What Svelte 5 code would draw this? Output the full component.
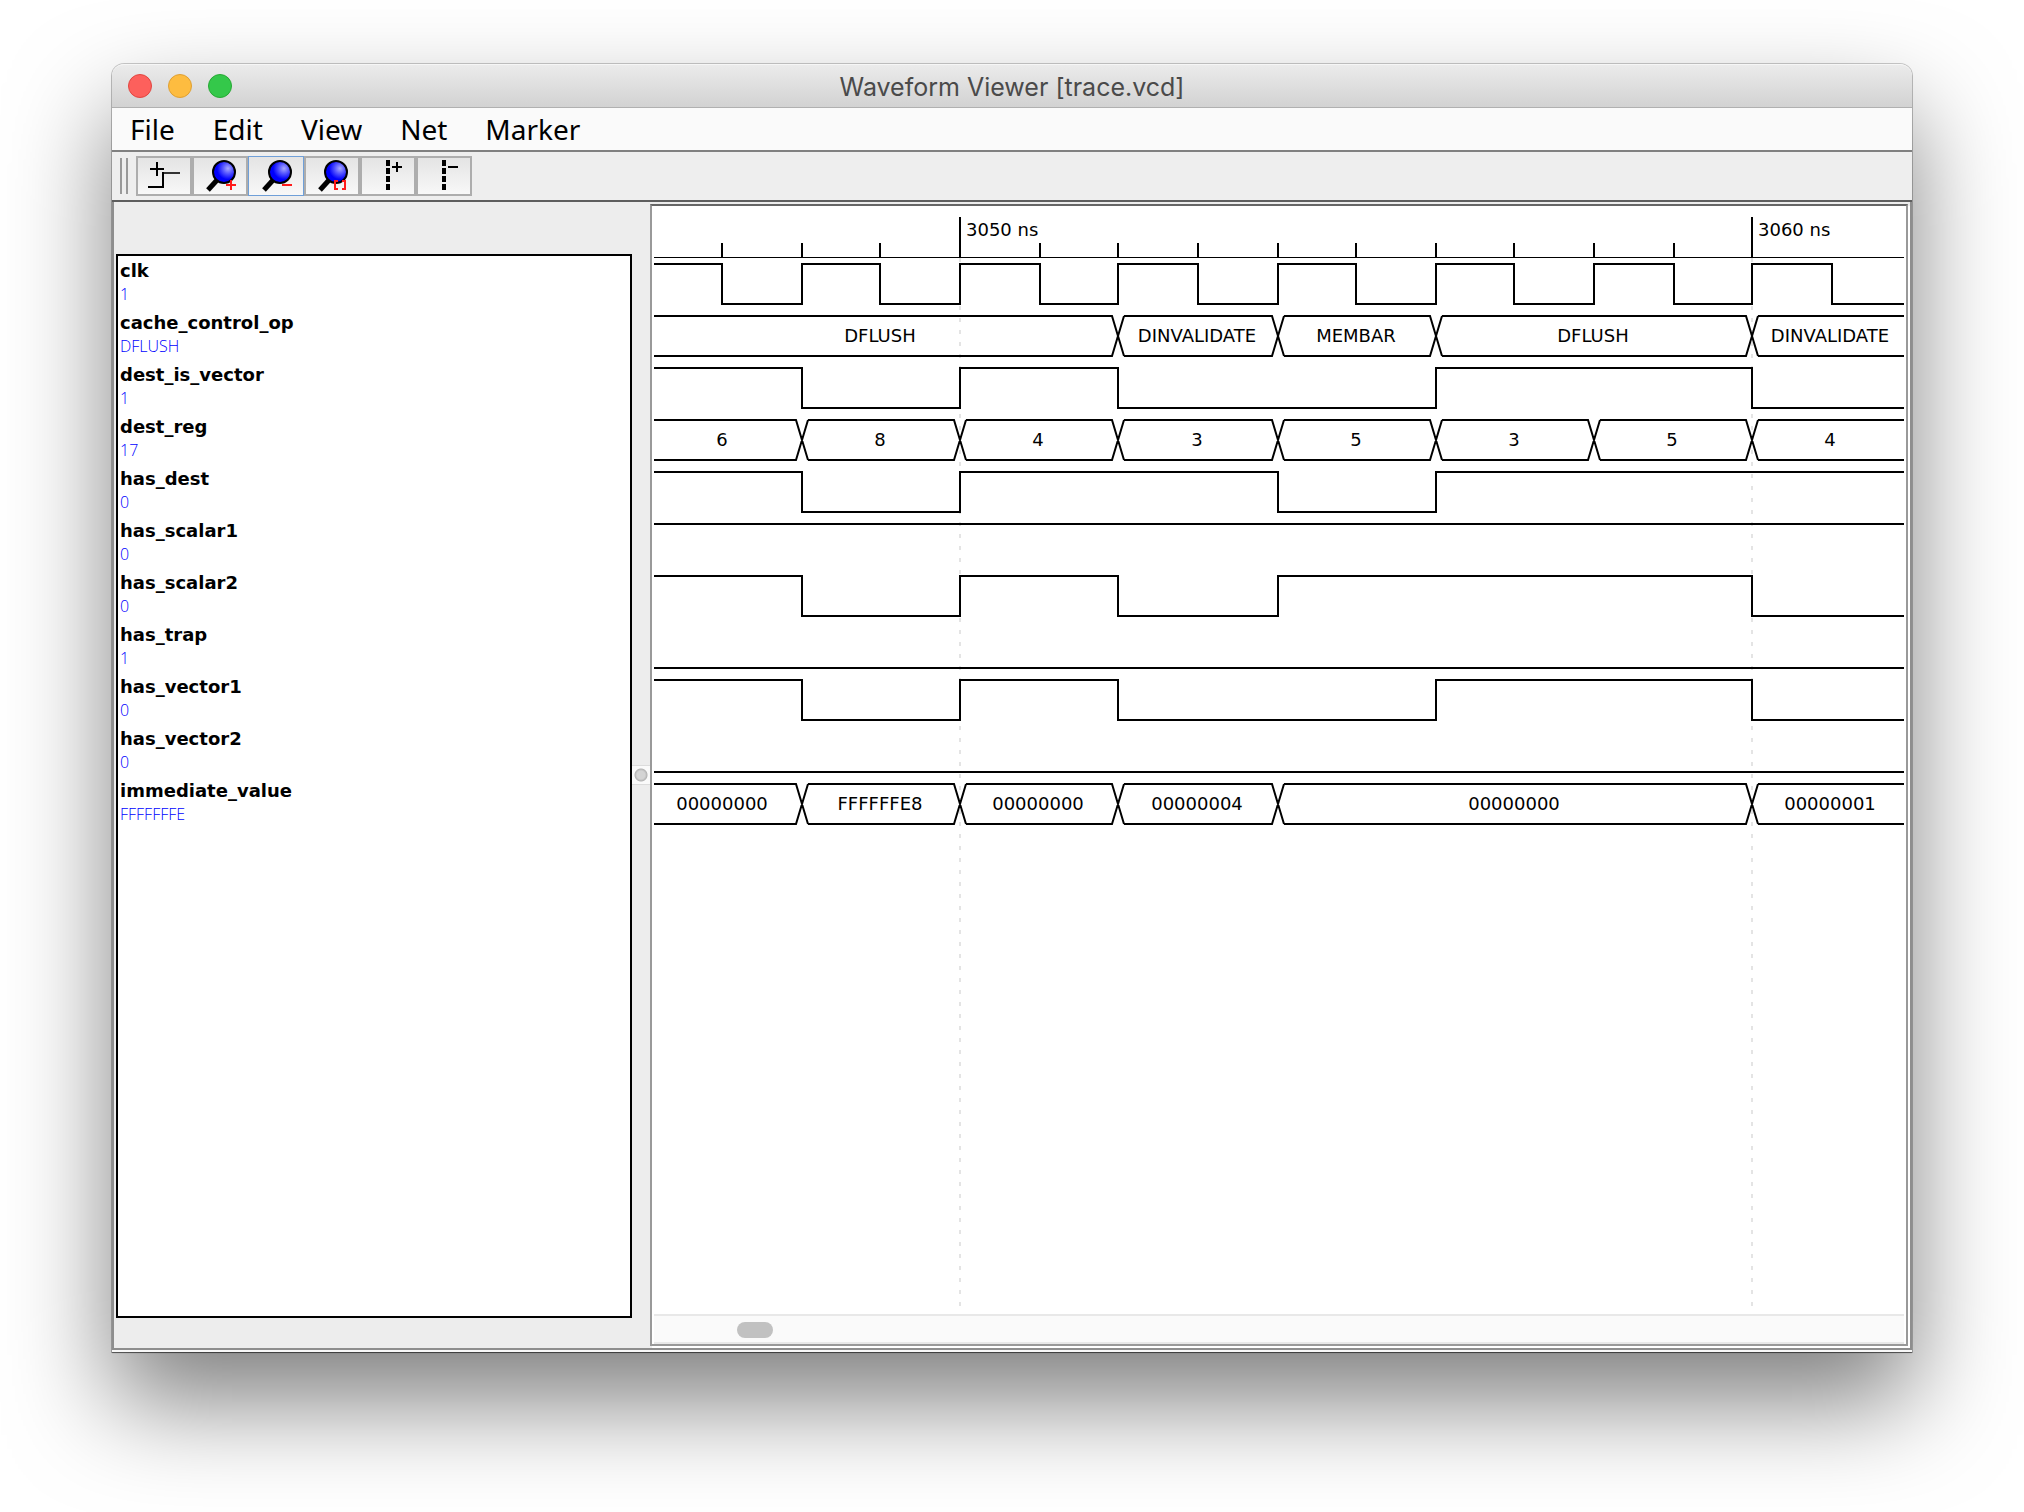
<script>
  const menus = ['File', 'Edit', 'View', 'Net', 'Marker'];
  const tools = [
    { id: 'insert', label: 'Insert net' },
    { id: 'zoom-in', label: 'Zoom in' },
    { id: 'zoom-out', label: 'Zoom out', focused: true },
    { id: 'zoom-fit', label: 'Zoom to selection' },
    { id: 'marker-add', label: 'Insert marker' },
    { id: 'marker-remove', label: 'Remove marker' },
  ];

  // Times are nanoseconds relative to 3050; flips lists the moments where a bit changes level.
  const signals = [
    { name: 'clk', value: '1', start: 1, flips: [-3, -2, -1, 0, 1, 2, 3, 4, 5, 6, 7, 8, 9, 10, 11, 12] },
    { name: 'cache_control_op', value: 'DFLUSH', bus: [[-4, 'DFLUSH'], [2, 'DINVALIDATE'], [4, 'MEMBAR'], [6, 'DFLUSH'], [10, 'DINVALIDATE']] },
    { name: 'dest_is_vector', value: '1', start: 1, flips: [-2, 0, 2, 6, 10] },
    { name: 'dest_reg', value: '17', bus: [[-4, '6'], [-2, '8'], [0, '4'], [2, '3'], [4, '5'], [6, '3'], [8, '5'], [10, '4']] },
    { name: 'has_dest', value: '0', start: 1, flips: [-2, 0, 4, 6] },
    { name: 'has_scalar1', value: '0', start: 1, flips: [] },
    { name: 'has_scalar2', value: '0', start: 1, flips: [-2, 0, 2, 4, 10] },
    { name: 'has_trap', value: '1', start: 0, flips: [] },
    { name: 'has_vector1', value: '0', start: 1, flips: [-2, 0, 2, 6, 10] },
    { name: 'has_vector2', value: '0', start: 0, flips: [] },
    { name: 'immediate_value', value: 'FFFFFFFE', bus: [[-4, '00000000'], [-2, 'FFFFFFE8'], [0, '00000000'], [2, '00000004'], [4, '00000000'], [10, '00000001']] },
  ];

  const LAST = 12;
  const ROW = 52;
  const TOP = 58;
  const SWING = 40;
  const SLANT = 6;

  let width = $state(1250);
  let height = $state(1108);

  const xAt = (t) => 306 + 2 * Math.round(t * 39.62 + 0.05);
  const ticks = Array.from({ length: 14 }, (_, i) => i - 3);

  function bitPath(signal, y) {
    let level = signal.start;
    const yOf = (l) => (l ? y : y + SWING);
    let d = `M0 ${yOf(level)}`;
    for (const t of signal.flips) {
      d += `H${xAt(t)}`;
      level = 1 - level;
      d += `V${yOf(level)}`;
    }
    return d + `H${Math.max(width, xAt(LAST))}`;
  }

  function busPath(signal, y) {
    const b = y + SWING;
    const end = Math.max(width, xAt(LAST));
    let top = `M0 ${y}`;
    let bottom = `M0 ${b}`;
    for (const [t] of signal.bus.slice(1)) {
      const x = xAt(t);
      top += `H${x - SLANT}L${x + SLANT} ${b}M${x + SLANT} ${y}`;
      bottom += `H${x - SLANT}L${x + SLANT} ${y}M${x + SLANT} ${b}`;
    }
    return `${top}H${end}${bottom}H${end}`;
  }

  function busLabels(signal) {
    return signal.bus.map(([t, text], i) => {
      const next = signal.bus[i + 1]?.[0] ?? LAST;
      return { text, x: (xAt(t) + xAt(next)) / 2 - 1 };
    });
  }
</script>

{#snippet lens()}
  <path d="M26 23L16 34" stroke="#000" stroke-width="5" />
  <circle cx="32" cy="16" r="11" fill="url(#lens-fill)" stroke="#000" stroke-width="2" />
{/snippet}

<svg class="defs" aria-hidden="true">
  <defs>
    <radialGradient id="lens-fill" cx="0.68" cy="0.34" r="0.5">
      <stop offset="0" stop-color="#a9a9ff" />
      <stop offset="0.45" stop-color="#5a5aff" />
      <stop offset="1" stop-color="#0000fb" />
    </radialGradient>
  </defs>
</svg>

<div class="desktop">
  <main class="window">
    <header class="titlebar">
      <div class="lights">
        <button class="light close" aria-label="Close"></button>
        <button class="light minimize" aria-label="Minimize"></button>
        <button class="light zoom" aria-label="Zoom"></button>
      </div>
      <h1>Waveform Viewer [trace.vcd]</h1>
    </header>

    <nav class="menubar">
      {#each menus as menu}
        <button>{menu}</button>
      {/each}
    </nav>

    <div class="toolbar" role="toolbar" aria-label="Tools">
      <span class="grip"></span>
      {#each tools as tool}
        <button class="tool" class:focused={tool.focused} aria-label={tool.label}>
          <svg width="56" height="40" viewBox="0 0 56 40" fill="none" stroke="#000" stroke-width="2">
            {#if tool.id === 'insert'}
              <path d="M14 13H28M21 6V20M12 31H27V17H28" />
              <path d="M28 17H44" stroke="#333" />
            {:else if tool.id === 'zoom-in'}
              {@render lens()}
              <path d="M34 29H44M39 24V34" stroke="#ff1a1a" />
            {:else if tool.id === 'zoom-out'}
              {@render lens()}
              <path d="M34 29H44" stroke="#ff1a1a" />
            {:else if tool.id === 'zoom-fit'}
              {@render lens()}
              <path d="M34 25H31V33H34M38 25H41V33H38" stroke="#ff1a1a" />
            {:else}
              <path d="M28 4V34" stroke-width="4" stroke-dasharray="6 2" />
              <path d={tool.id === 'marker-add' ? 'M32 11H42M37 6V16' : 'M32 11H42'} />
            {/if}
          </svg>
        </button>
      {/each}
    </div>

    <div class="body">
      <section class="nets" aria-label="Nets">
        <ul>
          {#each signals as signal}
            <li>
              <span class="name">{signal.name}</span>
              <span class="value">{signal.value}</span>
            </li>
          {/each}
        </ul>
      </section>

      <div class="divider"><span class="knob"></span></div>

      <section class="waves" aria-label="Waveforms">
        <div class="canvas" bind:clientWidth={width} bind:clientHeight={height}>
          <svg class="plot" fill="none" stroke="#000" stroke-width="2">
            {#each [0, 10] as t}
              <path class="guide" d="M{xAt(t)} 52V{height - 8}" />
            {/each}
            <path d="M0 51.5H{width}" stroke-width="1" />
            {#each ticks as t}
              {#if t % 10 === 0}
                <path d="M{xAt(t)} 11V51" />
                <text x={xAt(t) + 6} y="30">{3050 + t} ns</text>
              {:else}
                <path d="M{xAt(t)} 37V51" />
              {/if}
            {/each}
            {#each signals as signal, i}
              {@const y = TOP + i * ROW}
              {#if signal.bus}
                <path d={busPath(signal, y)} />
                {#each busLabels(signal) as label}
                  <text class="centered" x={label.x} y={y + 26}>{label.text}</text>
                {/each}
              {:else}
                <path d={bitPath(signal, y)} />
              {/if}
            {/each}
          </svg>
        </div>
        <div class="scrollbar"><span class="thumb"></span></div>
      </section>
    </div>
  </main>
</div>

<style>
  :global(body) {
    margin: 0;
    background: #fff;
  }

  * {
    box-sizing: border-box;
  }

  button {
    margin: 0;
    padding: 0;
    border: 0;
    background: none;
    color: inherit;
    font: inherit;
  }

  .defs {
    position: absolute;
    width: 0;
    height: 0;
  }

  .desktop {
    display: flex;
    min-height: 100vh;
    padding: 64px 112px 160px;
    overflow: hidden;
    font-family: 'Noto Sans', 'Open Sans', sans-serif;
    color: #000;
  }

  .window {
    flex: 1;
    display: flex;
    flex-direction: column;
    min-width: 0;
    border-radius: 12px 12px 0 0;
    background: #ededed;
    box-shadow:
      0 0 0 1px rgba(0, 0, 0, 0.2),
      0 1px 1px rgba(0, 0, 0, 0.5),
      0 50px 100px rgba(0, 0, 0, 0.5);
  }

  .titlebar {
    display: grid;
    grid-template-columns: 1fr auto 1fr;
    align-items: center;
    height: 44px;
    padding: 0 16px;
    border-top: 1px solid #f6f6f6;
    border-bottom: 1px solid #b0b0b0;
    border-radius: 12px 12px 0 0;
    background: linear-gradient(#ebebeb, #d2d2d2);
  }

  .lights {
    display: flex;
    gap: 16px;
  }

  .light {
    width: 24px;
    height: 24px;
    border: 1px solid;
    border-radius: 50%;
  }

  .close {
    background: #fd605c;
    border-color: #e14640;
  }

  .minimize {
    background: #fdbc40;
    border-color: #dfa033;
  }

  .zoom {
    background: #34c84a;
    border-color: #27a934;
  }

  h1 {
    margin: 0;
    padding-top: 2px;
    font: 400 25px/32px Inter, sans-serif;
    color: #4a4a4a;
  }

  .menubar {
    display: flex;
    gap: 38px;
    height: 44px;
    padding: 0 18px;
    border-bottom: 2px solid #808080;
    background: #fafafa;
    font-size: 28px;
    line-height: 42px;
  }

  .toolbar {
    display: flex;
    align-items: center;
    height: 50px;
    padding: 0 8px;
    border-bottom: 2px solid #5e5e5e;
    background: #eee;
  }

  .grip {
    width: 8px;
    height: 36px;
    margin-right: 8px;
    border: solid #999;
    border-width: 0 2px;
  }

  .tool {
    display: grid;
    place-items: center;
    width: 56px;
    height: 40px;
    border: 2px solid #adadad;
    background: linear-gradient(#e4e4e4, #f8f8f8);
  }

  .tool svg {
    margin: -2px;
  }

  .focused {
    border: 1px solid #6f9fd8;
  }

  .body {
    flex: 1;
    display: flex;
    margin-bottom: 2px;
    border: solid #8e8e8e;
    border-width: 0 2px 2px;
    box-shadow: 0 2px 0 #f8f8f8;
  }

  .nets {
    flex: 0 0 518px;
    display: flex;
    padding: 52px 0 30px 2px;
  }

  ul {
    flex: 1;
    margin: 0;
    padding: 2px;
    border: 2px solid #000;
    background: #fff;
    list-style: none;
  }

  li {
    display: flex;
    flex-direction: column;
    height: 52px;
  }

  .name {
    font-family: 'DejaVu Sans', sans-serif;
    font-size: 18px;
    font-weight: 700;
    line-height: 26px;
  }

  .value {
    font-family: 'Open Sans', sans-serif;
    font-size: 16px;
    font-weight: 300;
    line-height: 20px;
    color: #00f;
  }

  .divider {
    flex: 0 0 18px;
    display: flex;
    align-items: center;
  }

  .knob {
    flex: 1;
    height: 20px;
    border: solid #dcdcdc;
    border-width: 1px 0;
    background: radial-gradient(circle, #d4d4d4 4px, #b4b4b4 6px, #fafafa 7px);
  }

  .waves {
    flex: 1;
    display: flex;
    flex-direction: column;
    min-width: 0;
    margin: 2px 2px 2px 0;
    padding: 0 2px;
    border: 2px solid #999;
    border-top-color: #666;
    background: #fff;
    box-shadow: 2px 2px 0 #fff;
  }

  .canvas {
    flex: 1;
    display: grid;
    min-width: 0;
    min-height: 640px;
    overflow: hidden;
  }

  .plot {
    width: 100%;
    height: 100%;
  }

  .guide {
    stroke: #e4e4e4;
    stroke-dasharray: 4 8;
  }

  text {
    fill: #000;
    stroke: none;
    font-family: 'DejaVu Sans', sans-serif;
    font-size: 18px;
  }

  .centered {
    text-anchor: middle;
  }

  .scrollbar {
    height: 30px;
    padding: 6px 83px;
    border: solid #e8e8e8;
    border-width: 2px 0;
    background: #fafafa;
  }

  .thumb {
    display: block;
    width: 36px;
    height: 16px;
    border-radius: 8px;
    background: #c1c1c1;
  }
</style>
